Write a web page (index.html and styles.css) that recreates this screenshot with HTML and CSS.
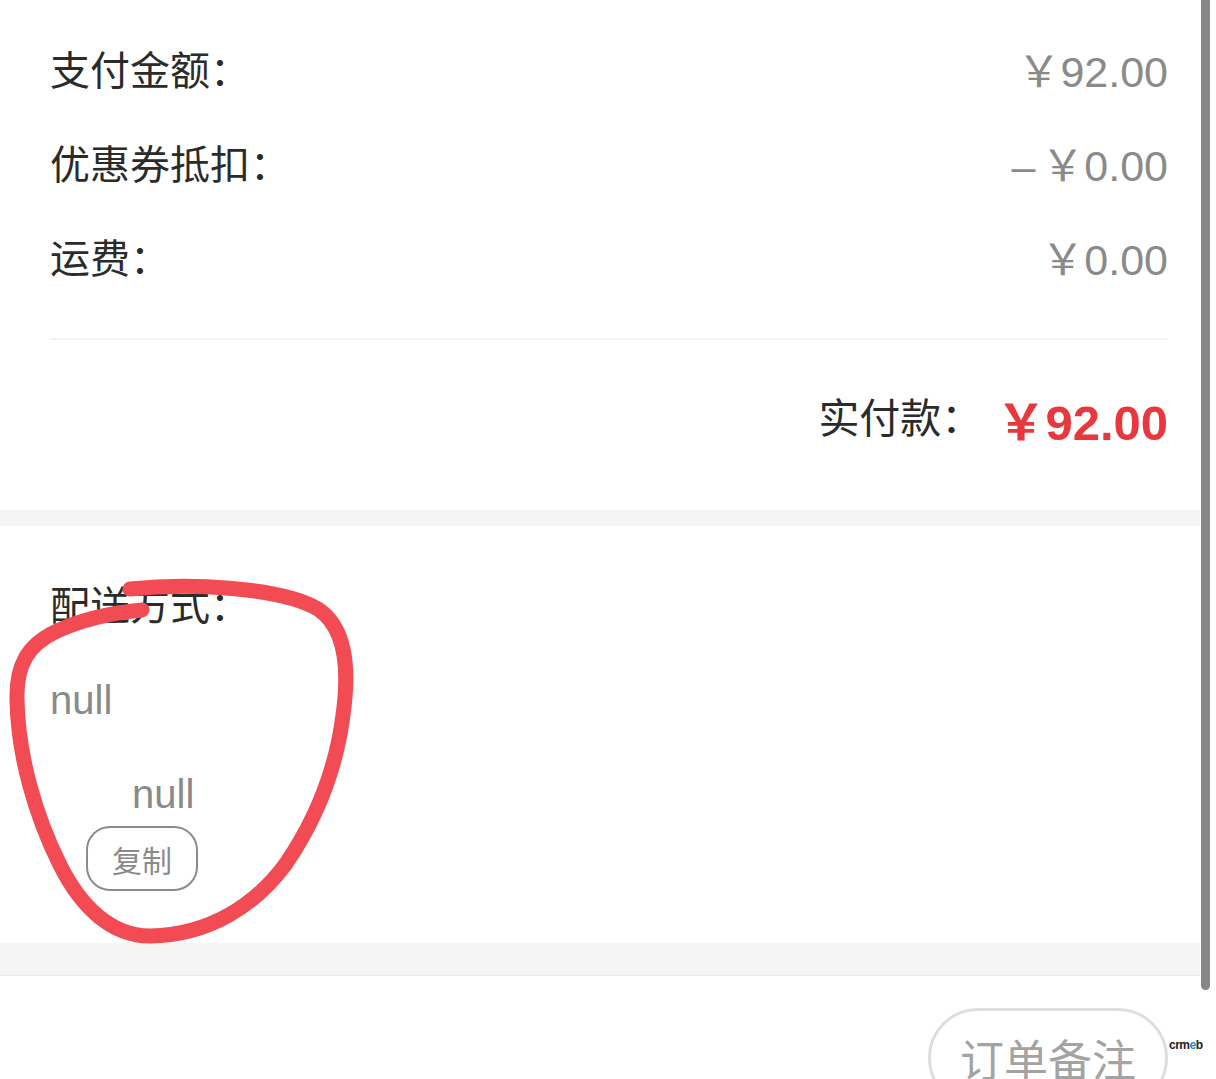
FILE: index.html
```html
<!DOCTYPE html>
<html lang="zh-CN">
<head>
    <meta charset="UTF-8">
    <meta name="viewport" content="width=device-width, initial-scale=1.0">
    <title>订单详情</title>
    <link rel="stylesheet" href="styles.css">
</head>
<body>
    <div class="page">
        <section class="card summary">
            <div class="row">
                <span class="label">支付金额：</span>
                <span class="val">￥92.00</span>
            </div>
            <div class="row">
                <span class="label">优惠券抵扣：</span>
                <span class="val"><span class="minus">–</span>￥0.00</span>
            </div>
            <div class="row">
                <span class="label">运费：</span>
                <span class="val">￥0.00</span>
            </div>
            <div class="divider"></div>
            <div class="total">
                <span class="label">实付款：</span>
                <span class="money">￥92.00</span>
            </div>
        </section>

        <div class="gap"></div>

        <section class="card delivery">
            <div class="label">配送方式：</div>
            <div class="null">null</div>
            <div class="null indent">null</div>
            <button class="copy">复制</button>
        </section>

        <div class="gap big"></div>

        <div class="footer">
            <button class="note">订单备注</button>
        </div>

        <!-- 手绘标注 -->
        <svg class="scribble" width="1200" height="1079" viewBox="0 0 1200 1079">
            <path d="M130 589 C 190 583, 280 587, 318 609 C 345 627, 350 665, 343 715 C 336 770, 316 820, 285 865 C 255 905, 210 935, 150 936 C 110 936, 80 905, 60 865 C 35 815, 18 755, 17 700 C 16 665, 28 645, 55 632 C 80 620, 110 613, 142 610"
                  fill="none" stroke="#f24b53" stroke-width="15" stroke-linecap="round"/>
        </svg>

        <div class="scrollbar"></div>
        <div class="brand">cr<b>m</b><i>e</i>b</div>
    </div>
</body>
</html>
```

FILE: styles.css
```css
body {
    margin: 0;
    background: #fff;
    font-family: 'Liberation Sans', 'Noto Sans CJK SC', sans-serif;
    color: #333;
    overflow: hidden;
}
.page {
    position: relative;
    width: 1200px;
    padding-right: 16px;
    height: 1079px;
    overflow: hidden;
}
.card {
    background: #fff;
}
.summary {
    padding: 21px 32px 0 50px;
}
.row {
    display: flex;
    justify-content: space-between;
    align-items: center;
    height: 94px;
}
.label {
    font-family: 'Noto Sans CJK SC', sans-serif;
    font-size: 40px;
    color: #2b2b2b;
}
.val {
    font-size: 43px;
    color: #8a8a8a;
}
.minus {
    margin-right: 6px;
}
.divider {
    height: 2px;
    background: #f3f3f3;
    margin-top: 35px;
}
.total {
    display: flex;
    justify-content: flex-end;
    align-items: center;
    box-sizing: border-box;
    height: 170px;
    padding-bottom: 20px;
}
.total .label {
    font-size: 41px;
    margin-right: 14px;
}
.money {
    font-size: 49px;
    font-weight: bold;
    color: #e8373d;
    margin-top: 6px;
}
.gap {
    height: 16px;
    background: #f5f5f5;
}
.gap.big {
    height: 32px;
    border-bottom: 1px solid #ebebeb;
}
.delivery {
    padding: 47px 32px 50px 50px;
    height: 320px;
}
.delivery .label {
    line-height: 60px;
}
.null {
    font-size: 40px;
    line-height: 60px;
    color: #8a8a8a;
    margin-top: 37px;
}
.null.indent {
    margin-top: 34px;
    margin-left: 82px;
}
.copy {
    display: block;
    width: 112px;
    height: 65px;
    margin-left: 36px;
    margin-top: 2px;
    border: 2px solid #8c8c8c;
    border-radius: 24px;
    background: #fff;
    font-family: 'Noto Sans CJK SC', sans-serif;
    font-size: 30px;
    color: #8a8a8a;
    padding: 0;
}
.footer {
    display: flex;
    justify-content: flex-end;
    padding: 32px 32px 0 50px;
}
.note {
    width: 240px;
    height: 100px;
    border: 3px solid #dedede;
    border-radius: 50px;
    background: #fff;
    font-family: 'Noto Sans CJK SC', sans-serif;
    font-size: 44px;
    color: #a3a3a3;
    padding: 0;
}
.scribble {
    position: absolute;
    left: 0;
    top: 0;
    pointer-events: none;
}
.scrollbar {
    position: absolute;
    left: 1201px;
    top: -10px;
    width: 9px;
    height: 1000px;
    background: #878787;
    border-radius: 5px;
}
.brand {
    position: absolute;
    left: 1169px;
    top: 1038px;
    font-size: 12px;
    font-weight: bold;
    color: #222;
    letter-spacing: -0.5px;
}
.brand b {
    font-weight: bold;
}
.brand i {
    font-style: normal;
    color: #1a8ad6;
}
```
